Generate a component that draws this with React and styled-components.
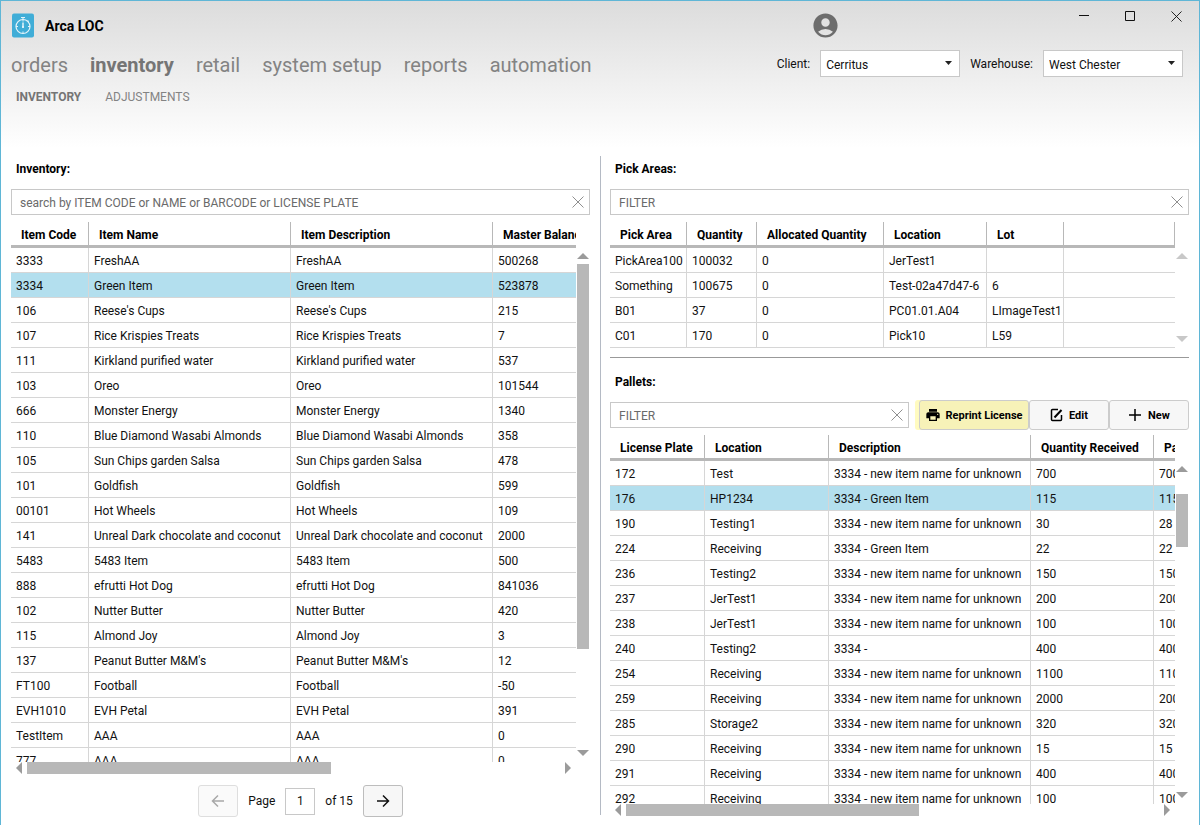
import React, { useState } from "react";
import styled, { createGlobalStyle } from "styled-components";
import { MdAccountCircle, MdPrint } from "react-icons/md";

const GlobalStyle = createGlobalStyle`
  * {
    box-sizing: border-box;
  }

  body {
    margin: 0;
    background: #fff;
  }

  body, button, input, select {
    font-family: Roboto, "Open Sans", sans-serif;
    font-size: 12px;
    color: #111;
  }
`;

const Window = styled.div`
  display: flex;
  flex-direction: column;
  height: 100vh;
  min-height: 600px;
  border: 1px solid #5fb6d6;
  border-bottom: 0;
  background: linear-gradient(#dcdcdc, #fff 147px);
`;

const TitleBar = styled.header`
  display: flex;
  height: 49px;
  padding-left: 10px;
`;

const Brand = styled.div`
  display: flex;
  align-items: center;
  gap: 10px;
  flex: 1;
`;

const BrandName = styled.h1`
  margin: 0;
  font-size: 14px;
  font-weight: 700;
  color: #000;
`;

const UserButton = styled.button`
  display: flex;
  align-items: center;
  width: 30px;
  margin-right: 220px;
  padding: 0;
  border: 0;
  background: none;
  color: #6d6d6d;
`;

const WindowButton = styled.button`
  display: flex;
  align-items: center;
  justify-content: center;
  width: 46px;
  height: 30px;
  padding: 0;
  border: 0;
  background: none;
`;

const NavBar = styled.div`
  display: flex;
  align-items: center;
  justify-content: space-between;
  height: 27px;
  padding: 0 16px 0 10px;
`;

const MainNav = styled.nav`
  display: flex;
  gap: 22px;
  padding-top: 3px;
`;

const NavLink = styled.a`
  font-size: 20px;
  line-height: 24px;
  font-weight: ${({ $active }) => ($active ? 700 : 400)};
  color: ${({ $active }) => ($active ? "#757575" : "#838383")};
  text-decoration: none;
`;

const SubNav = styled.nav`
  display: flex;
  gap: 24px;
  height: 79px;
  padding: 12px 15px 0;
`;

const SubNavLink = styled(NavLink)`
  font-size: 12px;
  line-height: 16px;
`;

const Selectors = styled.div`
  display: flex;
  align-items: center;
  gap: 10px;
`;

const SelectWrapper = styled.div`
  position: relative;

  svg {
    position: absolute;
    top: 11px;
    right: 8px;
    pointer-events: none;
  }
`;

const Select = styled.select`
  appearance: none;
  display: block;
  width: 140px;
  height: 27px;
  padding: 2px 20px 0 5px;
  border: 1px solid #c8c8c8;
  border-radius: 0;
  background: #fff;
`;

const Main = styled.main`
  display: grid;
  grid-template-columns: 1fr 1fr;
  flex: 1;
  min-height: 0;
`;

const Panel = styled.section`
  display: flex;
  flex-direction: column;
  min-width: 0;
  min-height: 0;
  padding: 0 10px ${({ $bottom }) => $bottom}px 10px;
`;

const Side = styled.div`
  display: flex;
  flex-direction: column;
  min-width: 0;
  min-height: 0;
  margin-bottom: 10px;
  border-left: 1px solid #b4bac4;

  ${Panel} {
    padding-left: 9px;
  }

  ${Panel}:last-child {
    flex: 1;
    margin-bottom: -10px;
  }
`;

const PanelTitle = styled.h2`
  margin: 0;
  padding: 6px 5px ${({ $tight }) => ($tight ? 10 : 12)}px;
  font-size: 12px;
  line-height: 15px;
  font-weight: 700;
  color: #000;
`;

const Toolbar = styled.div`
  display: flex;
  align-items: center;
  gap: 10px;
  height: ${({ $height }) => $height}px;
`;

const FilterBox = styled.div`
  display: flex;
  align-items: center;
  flex: 1;
  height: 26px;
  padding: 0 5px 0 8px;
  border: 1px solid #c8c8c8;
  background: #fff;
`;

const FilterInput = styled.input`
  flex: 1;
  min-width: 0;
  padding: 2px 0 0;
  border: 0;
  outline: 0;
  background: none;

  &::placeholder {
    color: #6a6a6a;
  }
`;

const IconButton = styled.button`
  display: flex;
  padding: 0;
  border: 0;
  background: none;
  color: #8f8f8f;
`;

const ButtonGroup = styled.div`
  display: flex;
`;

const ActionButton = styled.button`
  display: flex;
  align-items: center;
  justify-content: center;
  gap: ${({ $wide }) => ($wide ? 4 : 6)}px;
  width: ${({ $wide }) => ($wide ? 110 : 80)}px;
  height: 30px;
  padding: 0;
  border: 1px solid #ccc;
  border-radius: 3px;
  background: ${({ $highlight }) => ($highlight ? "#f7f2b8" : "#f7f7f7")};
  box-shadow: ${({ $highlight }) => ($highlight ? "-4px 0 0 #fffbc0" : "none")};
  font-size: 11px;
  font-weight: 700;
  color: #000;
`;

const GridFrame = styled.div`
  display: grid;
  grid-template-columns: minmax(0, 1fr) 14px;
  grid-template-rows: minmax(0, 1fr) auto;
  flex: ${({ $grow }) => ($grow ? "1" : "none")};
  min-height: 0;
  margin-top: ${({ $gap }) => $gap}px;
`;

const Viewport = styled.div`
  overflow: hidden;
  min-height: 0;
`;

const Table = styled.table`
  width: ${({ $stretch }) => ($stretch ? "100%" : "max-content")};
  table-layout: fixed;
  border-collapse: separate;
  border-spacing: 0;
`;

const Th = styled.th`
  height: 26px;
  padding: 2px 10px 0;
  overflow: hidden;
  border-right: 1px solid #b8b8b8;
  border-bottom: 3px solid #b8b8b8;
  text-align: left;
  white-space: nowrap;
  color: #000;
`;

const Td = styled.td`
  height: 25px;
  padding: 2px 5px 0;
  overflow: hidden;
  border-right: 1px solid #d6d6d6;
  border-bottom: 1px solid #d6d6d6;
  white-space: nowrap;

  &:last-child {
    border-right: 0;
  }
`;

const Row = styled.tr`
  background: ${({ $selected }) => ($selected ? "#b3dfee" : "#fff")};
`;

const VerticalBar = styled.div`
  display: flex;
  flex-direction: column;
  align-items: center;
  padding: 31px 0 6px;
  color: ${({ $idle }) => ($idle ? "#c8c8c8" : "#9b9b9b")};
`;

const HorizontalBar = styled.div`
  display: flex;
  align-items: flex-start;
  height: 13px;
  padding: 0 5px;
  color: #9b9b9b;
`;

const Track = styled.div`
  flex: 1;
  margin: ${({ $vertical }) => ($vertical ? "5px 0" : "0 5px")};
`;

const Thumb = styled.div`
  background: #b8b8b8;
  min-width: 12px;
  min-height: 12px;
`;

const Pager = styled.form`
  display: flex;
  align-items: center;
  justify-content: center;
  gap: 10px;
  height: 32px;
  margin-top: 10px;
`;

const PagerButton = styled.button`
  display: flex;
  align-items: center;
  justify-content: center;
  width: 40px;
  height: 32px;
  padding: 0;
  border: 1px solid #bdbdbd;
  border-radius: 3px;
  background: #f7f7f7;
  color: #111;

  &:disabled {
    border-color: #dedede;
    background: #fafafa;
    color: #a8a8a8;
  }
`;

const PagerInput = styled.input`
  width: 30px;
  height: 27px;
  padding: 0;
  border: 1px solid #c8c8c8;
  text-align: center;
`;

const Divider = styled.hr`
  width: calc(100% - 19px);
  height: 1px;
  margin: 9px 10px 11px 9px;
  border: 0;
  background: #999;
`;

const inventoryColumns = [
  { label: "Item Code", width: 78 },
  { label: "Item Name", width: 202 },
  { label: "Item Description", width: 202 },
  { label: "Master Balance", width: 120 },
];

const inventoryRows = [
  ["3333", "FreshAA", "500268"],
  ["3334", "Green Item", "523878"],
  ["106", "Reese's Cups", "215"],
  ["107", "Rice Krispies Treats", "7"],
  ["111", "Kirkland purified water", "537"],
  ["103", "Oreo", "101544"],
  ["666", "Monster Energy", "1340"],
  ["110", "Blue Diamond Wasabi Almonds", "358"],
  ["105", "Sun Chips garden Salsa", "478"],
  ["101", "Goldfish", "599"],
  ["00101", "Hot Wheels", "109"],
  ["141", "Unreal Dark chocolate and coconut", "2000"],
  ["5483", "5483 Item", "500"],
  ["888", "efrutti Hot Dog", "841036"],
  ["102", "Nutter Butter", "420"],
  ["115", "Almond Joy", "3"],
  ["137", "Peanut Butter M&M's", "12"],
  ["FT100", "Football", "-50"],
  ["EVH1010", "EVH Petal", "391"],
  ["TestItem", "AAA", "0"],
  ["777", "AAA", "0"],
].map(([code, name, balance]) => [code, name, name, balance]);

const pickColumns = [
  { label: "Pick Area", width: 77 },
  { label: "Quantity", width: 70 },
  { label: "Allocated Quantity", width: 127 },
  { label: "Location", width: 103 },
  { label: "Lot", width: 77 },
  { label: "" },
];

const pickRows = [
  ["PickArea100", "100032", "0", "JerTest1", "", ""],
  ["Something", "100675", "0", "Test-02a47d47-6", "6", ""],
  ["B01", "37", "0", "PC01.01.A04", "LImageTest1", ""],
  ["C01", "170", "0", "Pick10", "L59", ""],
];

const palletColumns = [
  { label: "License Plate", width: 95 },
  { label: "Location", width: 124 },
  { label: "Description", width: 202 },
  { label: "Quantity Received", width: 123 },
  { label: "Pallet Quantity", width: 120 },
];

const unknownItem = "3334 - new item name for unknown";

const palletRows = [
  ["172", "Test", unknownItem, "700"],
  ["176", "HP1234", "3334 - Green Item", "115"],
  ["190", "Testing1", unknownItem, "30", "28"],
  ["224", "Receiving", "3334 - Green Item", "22"],
  ["236", "Testing2", unknownItem, "150"],
  ["237", "JerTest1", unknownItem, "200"],
  ["238", "JerTest1", unknownItem, "100"],
  ["240", "Testing2", "3334 -", "400"],
  ["254", "Receiving", unknownItem, "1100"],
  ["259", "Receiving", unknownItem, "2000"],
  ["285", "Storage2", unknownItem, "320"],
  ["290", "Receiving", unknownItem, "15"],
  ["291", "Receiving", unknownItem, "400"],
  ["292", "Receiving", unknownItem, "100"],
].map(([plate, location, description, received, left = received]) => [
  plate, location, description, received, left,
]);

const Logo = () => (
  <svg width="24" height="25" viewBox="0 0 24 25" fill="none" stroke="#e4f4fa">
    <rect x="1" y="0.5" width="22" height="24" rx="2" fill="#40add7" stroke="none" />
    <circle cx="12" cy="13.5" r="7" strokeWidth="1.2" />
    <path d="M12 6.500v2M12 18.500v2M5 13.500h2M17 13.500h2M10 4.500h4M12 4.500v2M16.500 7.500l1.500 1" />
    <path d="M12 9.500v5" strokeWidth="1.500" />
    <circle cx="12" cy="14" r="0.700" fill="#e4f4fa" />
  </svg>
);

const Cross = ({ size = 12 }) => (
  <svg width={size} height={size} viewBox="0 0 12 12" fill="none" stroke="currentColor">
    <path d="M0.500 0.500l11 11M11.500 0.500l-11 11" />
  </svg>
);

const EditIcon = () => (
  <svg width="13" height="14" viewBox="0 0 13 14" fill="none" stroke="currentColor">
    <path d="M8 1.500H2.500A1 1 0 0 0 1.500 2.500v9A1 1 0 0 0 2.500 12.500h8A1 1 0 0 0 11.500 11.500V7" strokeWidth="1.500" />
    <path d="M4.500 9.500L11.500 2" strokeWidth="2" />
  </svg>
);

const PlusIcon = () => (
  <svg width="14" height="14" viewBox="0 0 14 14" stroke="currentColor" strokeWidth="1.500">
    <path d="M7 1v12M1 7h12" />
  </svg>
);

const PagerArrow = ({ back }) => (
  <svg width="14" height="14" viewBox="0 0 14 14" fill="none" stroke="currentColor" strokeWidth="1.500">
    <path d={back ? "M13 7H2M7 1.500L1.500 7L7 12.500" : "M1 7h11M7 1.500L12.500 7L7 12.500"} />
  </svg>
);

const arrowPoints = {
  up: "0,6 6,0 12,6",
  down: "0,0 12,0 6,6",
  left: "6,0 6,12 0,6",
  right: "0,0 6,6 0,12",
};

const ScrollArrow = ({ direction }) => {
  const upright = direction === "up" || direction === "down";
  return (
    <svg width={upright ? 12 : 6} height={upright ? 6 : 12} fill="currentColor">
      <polygon points={arrowPoints[direction]} />
    </svg>
  );
};

const Dropdown = ({ id, options }) => (
  <SelectWrapper>
    <Select id={id}>
      {options.map((option) => (
        <option key={option}>{option}</option>
      ))}
    </Select>
    <svg width="7" height="4" fill="#222">
      <polygon points="0,0 7,0 3.500,4" />
    </svg>
  </SelectWrapper>
);

const Filter = ({ label, placeholder }) => {
  const [value, setValue] = useState("");

  return (
    <FilterBox>
      <FilterInput
        aria-label={label}
        placeholder={placeholder}
        value={value}
        onChange={(e) => setValue(e.target.value)}
      />
      <IconButton type="button" aria-label="Clear" onClick={() => setValue("")}>
        <Cross />
      </IconButton>
    </FilterBox>
  );
};

const DataGrid = ({ columns, rows, initialRow, gap, grow, vertical, horizontal }) => {
  const [selected, setSelected] = useState(initialRow);
  const stretch = columns.some((column) => !column.width);

  return (
    <GridFrame $gap={gap} $grow={grow}>
      <Viewport>
        <Table $stretch={stretch}>
          <colgroup>
            {columns.map((column) => (
              <col key={column.label} style={{ width: column.width }} />
            ))}
          </colgroup>
          <thead>
            <tr>
              {columns.map((column) => (
                <Th key={column.label}>{column.label}</Th>
              ))}
            </tr>
          </thead>
          <tbody>
            {rows.map((row) => (
              <Row key={row[0]} $selected={row[0] === selected} onClick={() => setSelected(row[0])}>
                {row.map((cell, index) => (
                  <Td key={index}>{cell}</Td>
                ))}
              </Row>
            ))}
          </tbody>
        </Table>
      </Viewport>
      <VerticalBar $idle={!vertical}>
        <ScrollArrow direction="up" />
        <Track $vertical>
          {vertical && (
            <Thumb style={{ width: 12, height: vertical.size, marginTop: vertical.start }} />
          )}
        </Track>
        <ScrollArrow direction="down" />
      </VerticalBar>
      {horizontal && (
        <HorizontalBar>
          <ScrollArrow direction="left" />
          <Track>
            <Thumb style={{ height: 12, width: horizontal }} />
          </Track>
          <ScrollArrow direction="right" />
        </HorizontalBar>
      )}
    </GridFrame>
  );
};

const App = () => {
  const [page, setPage] = useState(1);

  return (
    <>
      <GlobalStyle />
      <Window>
        <TitleBar>
          <Brand>
            <Logo />
            <BrandName>Arca LOC</BrandName>
          </Brand>
          <UserButton aria-label="Account">
            <MdAccountCircle size={29} />
          </UserButton>
          <WindowButton aria-label="Minimize">
            <svg width="11" height="11" stroke="#111"><path d="M0 4.500h10" /></svg>
          </WindowButton>
          <WindowButton aria-label="Maximize">
            <svg width="11" height="11" stroke="#111" fill="none"><path d="M0.500 0.500h9v9h-9z" /></svg>
          </WindowButton>
          <WindowButton aria-label="Close">
            <Cross size={11} />
          </WindowButton>
        </TitleBar>

        <NavBar>
          <MainNav>
            {["orders", "inventory", "retail", "system setup", "reports", "automation"].map((item) => (
              <NavLink key={item} href="#" $active={item === "inventory"}>{item}</NavLink>
            ))}
          </MainNav>
          <Selectors>
            <label htmlFor="client">Client:</label>
            <Dropdown id="client" options={["Cerritus"]} />
            <label htmlFor="warehouse">Warehouse:</label>
            <Dropdown id="warehouse" options={["West Chester"]} />
          </Selectors>
        </NavBar>

        <SubNav>
          <SubNavLink href="#" $active>INVENTORY</SubNavLink>
          <SubNavLink href="#">ADJUSTMENTS</SubNavLink>
        </SubNav>

        <Main>
          <Panel $bottom={8}>
            <PanelTitle>Inventory:</PanelTitle>
            <Toolbar $height={26}>
              <Filter
                label="Search inventory"
                placeholder="search by ITEM CODE or NAME or BARCODE or LICENSE PLATE"
              />
            </Toolbar>
            <DataGrid
              columns={inventoryColumns}
              rows={inventoryRows}
              initialRow="3334"
              gap={7}
              grow
              vertical={{ start: 0, size: "80%" }}
              horizontal="57%"
            />
            <Pager onSubmit={(e) => e.preventDefault()}>
              <PagerButton type="button" aria-label="Previous page" disabled={page === 1} onClick={() => setPage(page - 1)}>
                <PagerArrow back />
              </PagerButton>
              <label htmlFor="page">Page</label>
              <PagerInput id="page" value={page} onChange={(e) => setPage(Number(e.target.value))} />
              <span>of 15</span>
              <PagerButton type="button" aria-label="Next page" onClick={() => setPage(page + 1)}>
                <PagerArrow />
              </PagerButton>
            </Pager>
          </Panel>

          <Side>
            <Panel $bottom={0}>
              <PanelTitle>Pick Areas:</PanelTitle>
              <Toolbar $height={26}>
                <Filter label="Filter pick areas" placeholder="FILTER" />
              </Toolbar>
              <DataGrid columns={pickColumns} rows={pickRows} gap={7} />
            </Panel>
            <Divider />
            <Panel $bottom={8}>
              <PanelTitle $tight>Pallets:</PanelTitle>
              <Toolbar $height={30}>
                <Filter label="Filter pallets" placeholder="FILTER" />
                <ButtonGroup>
                  <ActionButton type="button" $wide $highlight>
                    <MdPrint size={16} />
                    Reprint License
                  </ActionButton>
                  <ActionButton type="button">
                    <EditIcon />
                    Edit
                  </ActionButton>
                  <ActionButton type="button">
                    <PlusIcon />
                    New
                  </ActionButton>
                </ButtonGroup>
              </Toolbar>
              <DataGrid
                columns={palletColumns}
                rows={palletRows}
                initialRow="176"
                gap={5}
                grow
                vertical={{ start: 17, size: "17%" }}
                horizontal="55%"
              />
            </Panel>
          </Side>
        </Main>
      </Window>
    </>
  );
};

export default App;
